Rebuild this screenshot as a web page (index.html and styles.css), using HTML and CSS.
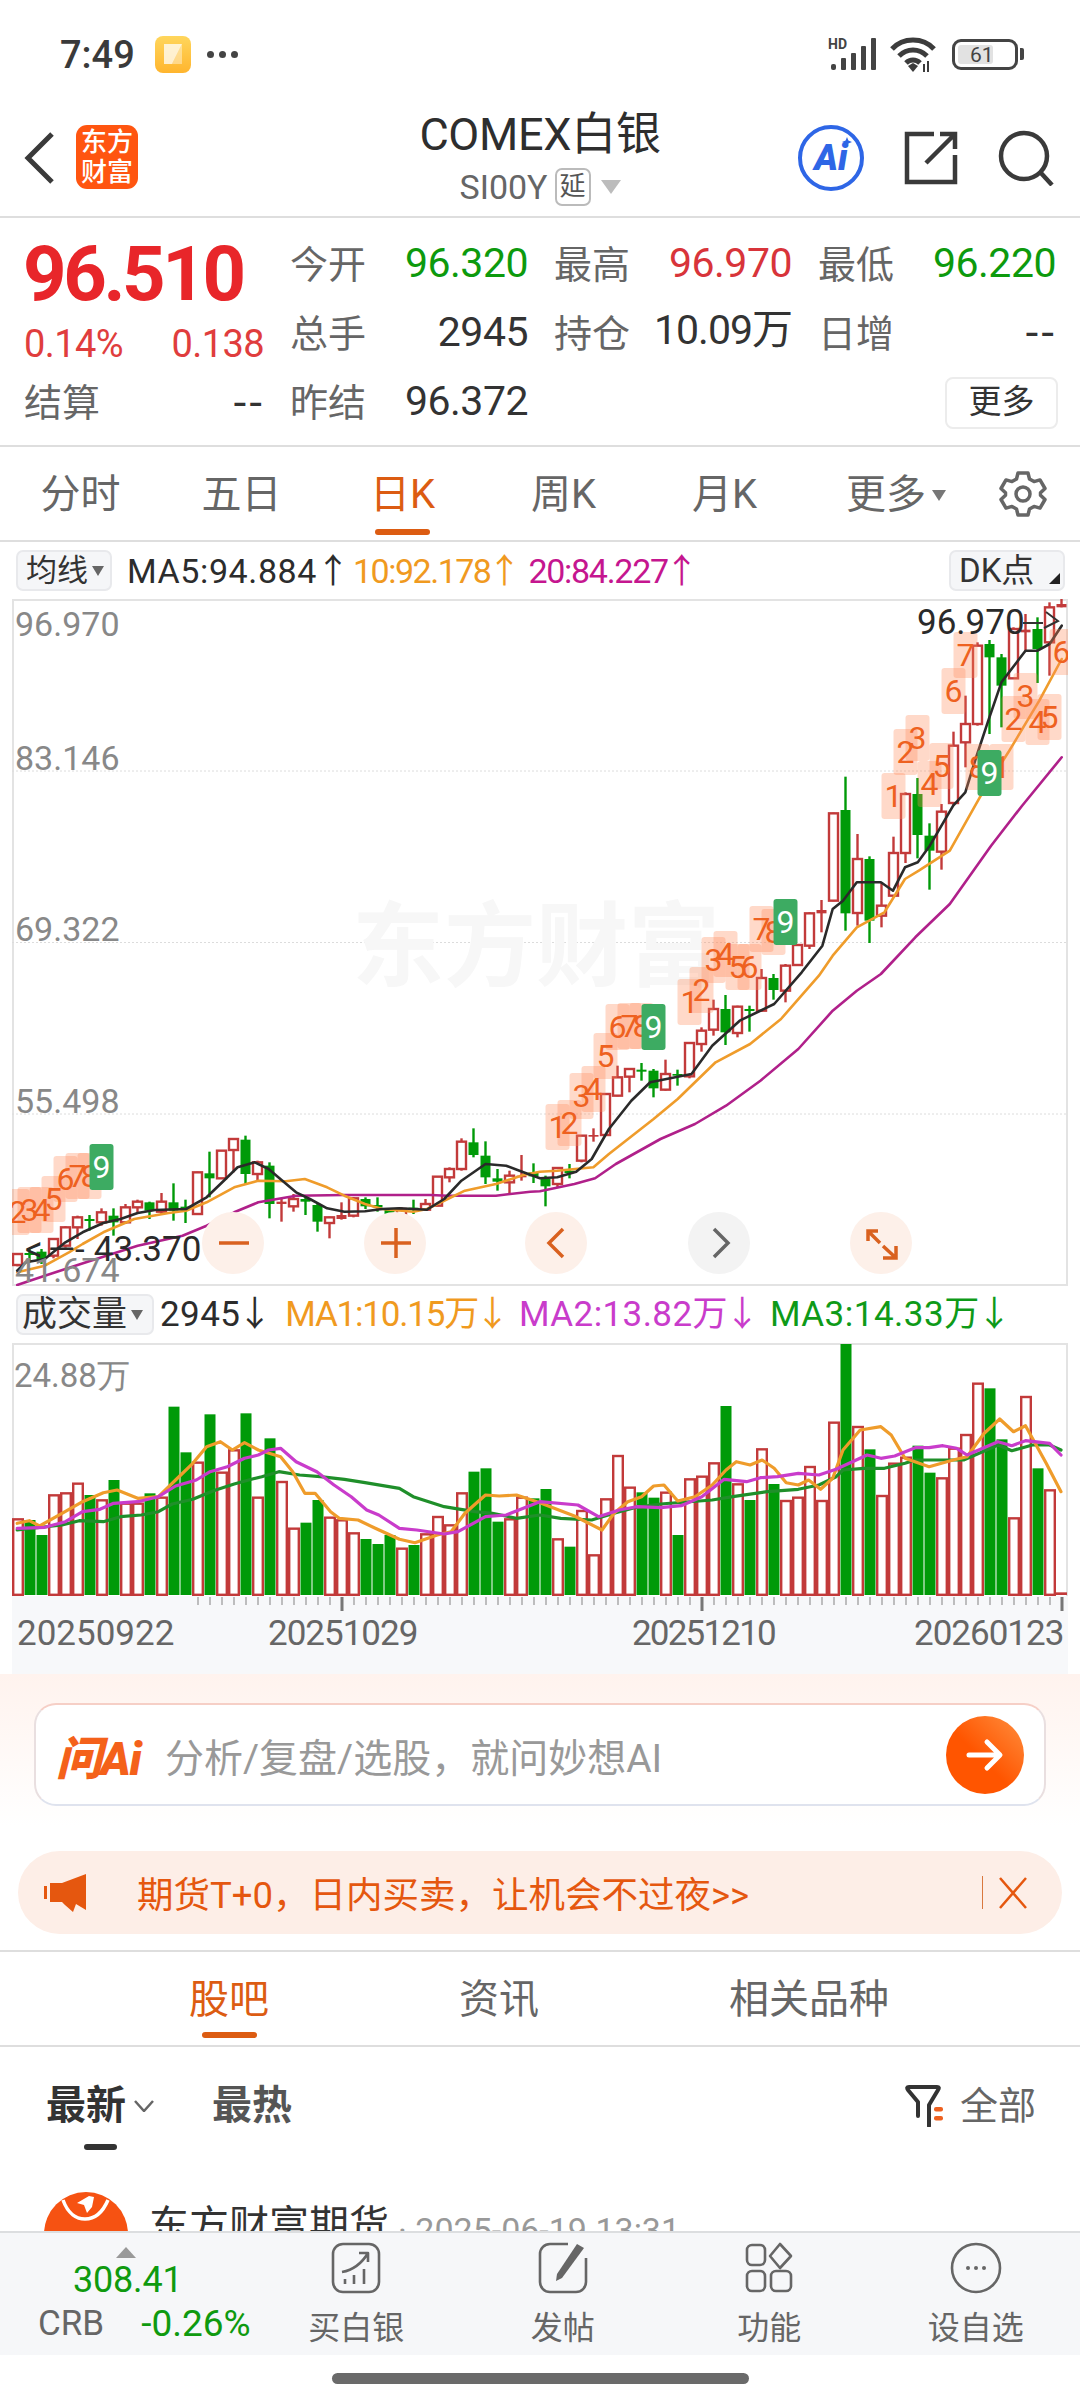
FILE: index.html
```html
<!DOCTYPE html>
<html lang="zh">
<head>
<meta charset="utf-8">
<title>COMEX白银</title>
<link rel="stylesheet" href="styles.css">
</head>
<body>
<div class="page">
  <header class="status">
    <span class="clock">7:49</span>
    <span class="note-icon"><svg width="36" height="36" viewBox="0 0 36 36"><path class="note-fold" d="M9 8h18L17 28H9z"/><path class="note-fold2" d="M27 8v20H17z"/></svg></span>
    <span class="status-dots"><i></i><i></i><i></i></span>
    <span class="status-right">
      <svg class="signal" width="52" height="34" viewBox="0 0 52 34">
        <text class="hd" x="0" y="12">HD</text>
        <rect x="3" y="27" width="5" height="6" rx="2"/><rect x="13" y="21" width="5" height="12" rx="1"/><rect x="23" y="16" width="5" height="17" rx="1"/><rect x="33" y="9" width="5" height="24" rx="1"/><rect x="43" y="1" width="5" height="32" rx="1"/>
      </svg>
      <svg class="wifi" width="46" height="36" viewBox="0 0 46 36">
        <path class="wifi-arc" d="M2 13C13 1 33 1 44 13M9 20C17 12 29 12 37 20M16 27C20 23 26 23 30 27"/>
        <path class="wifi-dot" d="M23 36l-5-6 5-3 5 3z"/>
        <rect class="wifi-dot" x="33" y="28" width="2" height="8"/><rect class="wifi-dot" x="37" y="25" width="2" height="11"/>
      </svg>
      <span class="battery"><span class="battery-fill"></span><span class="battery-num">61</span></span>
      <span class="battery-cap"></span>
    </span>
  </header>

  <nav class="nav">
    <svg class="nav-back" width="32" height="52" viewBox="0 0 32 52"><path d="M28 2L4 26l24 24"/></svg>
    <span class="brand"><span>东方</span><span>财富</span></span>
    <div class="nav-title">
      <div class="nav-name">COMEX白银</div>
      <div class="nav-sub">SI00Y<span class="tag">延</span><i class="caret"></i></div>
    </div>
    <div class="nav-tools">
      <span class="ai-badge">Ai<svg class="ai-star" width="10" height="10" viewBox="0 0 10 10"><path d="M5 0l1.4 3.6L10 5 6.4 6.4 5 10 3.6 6.4 0 5l3.6-1.4z"/></svg></span>
      <svg class="tool" width="54" height="54" viewBox="0 0 54 54"><path d="M30 3H3v48h48V24M22 32L51 3M36 3h15v15"/></svg>
      <svg class="tool" width="56" height="56" viewBox="0 0 56 56"><circle cx="26" cy="26" r="23"/><path d="M43 43l11 12"/></svg>
    </div>
  </nav>

  <section class="quote">
    <div class="quote-main">
      <div class="price">96.510</div>
      <div class="change"><span>0.14%</span><span>0.138</span></div>
      <div class="kv"><span class="k">结算</span><span class="v dash">--</span></div>
    </div>
    <div class="quote-grid">
      <div class="kv"><span class="k">今开</span><span class="v green">96.320</span></div>
      <div class="kv"><span class="k">最高</span><span class="v red">96.970</span></div>
      <div class="kv"><span class="k">最低</span><span class="v green">96.220</span></div>
      <div class="kv"><span class="k">总手</span><span class="v">2945</span></div>
      <div class="kv"><span class="k">持仓</span><span class="v v-wan">10.09万</span></div>
      <div class="kv"><span class="k">日增</span><span class="v dash">--</span></div>
      <div class="kv"><span class="k">昨结</span><span class="v">96.372</span></div>
      <div></div>
      <div class="more-cell"><span class="more-btn">更多</span></div>
    </div>
  </section>

  <div class="period-tabs">
    <span class="ptab">分时</span>
    <span class="ptab">五日</span>
    <span class="ptab active">日K</span>
    <span class="ptab">周K</span>
    <span class="ptab">月K</span>
    <span class="ptab ptab-more">更多<i class="caret-small"></i></span>
    <svg class="gear" width="48" height="48" viewBox="0 0 48 48"><path d="M19 3H29L30.5 9 35 11.6 41 9.9 46 18.5 41.5 22.8V25.2L46 29.5 41 38.1 35 36.4 30.5 39 29 45H19L17.5 39 13 36.4 7 38.1 2 29.5 6.5 25.2V22.8L2 18.5 7 9.9 13 11.6 17.5 9Z"/><circle cx="24" cy="24" r="7"/></svg>
  </div>

  <div class="legend legend-price">
    <span class="chip">均线<i class="caret-chip"></i></span>
    <span class="lg black l1">MA5:94.884<b>↑</b></span>
    <span class="lg orange l2">10:92.178<b>↑</b></span>
    <span class="lg magenta l3">20:84.227<b>↑</b></span>
    <span class="chip chip-dk">DK点<i class="corner"></i></span>
  </div>

  <svg id="kline" class="kline" viewBox="12 600 1056 687" width="1056" height="687">
    <rect class="frame" x="13" y="601" width="1054" height="685"/>
    <line class="grid" x1="12" x2="1067" y1="772" y2="772"/>
    <line class="grid" x1="12" x2="1067" y1="943.5" y2="943.5"/>
    <line class="grid" x1="12" x2="1067" y1="1115" y2="1115"/>
    <text class="watermark" x="352" y="980">东方财富</text>
    <g id="kl-candles"></g>
    <g id="kl-lines"></g>
    <g id="kl-marks"></g>
    <text class="axis" x="15" y="637">96.970</text>
    <text class="axis" x="15" y="771">83.146</text>
    <text class="axis" x="15" y="942">69.322</text>
    <text class="axis" x="15" y="1114">55.498</text>
    <text class="axis" x="15" y="1283">41.674</text>
    <text class="note" x="917" y="635">96.970</text>
    <path class="note-line" d="M1023 624h20M1046 613l12 9-14 7"/>
    <text class="note" x="25" y="1262">&lt;<tspan dx="5">—-</tspan><tspan dx="9">43.370</tspan></text>
    <g class="zoom-btn">
      <circle cx="233" cy="1244" r="31"/><path d="M219 1244h30"/>
      <circle cx="395" cy="1244" r="31"/><path d="M381 1244h30M396 1229v30"/>
      <circle cx="556" cy="1244" r="31"/><path d="M563 1230l-14 14 14 14"/>
      <circle class="idle" cx="719" cy="1244" r="31"/><path class="idle" d="M714 1230l14 14-14 14"/>
      <circle cx="881" cy="1244" r="31"/><path d="M868 1232l12 12M868 1242v-10h10M883 1247l13 12M896 1247v12h-13"/>
    </g>
  </svg>

  <div class="legend legend-vol">
    <span class="chip chip-vol">成交量<i class="caret-chip"></i></span>
    <span class="vg black v1">2945<b>↓</b></span>
    <span class="vg orange v2">MA1:10.15万<b>↓</b></span>
    <span class="vg violet v3">MA2:13.82万<b>↓</b></span>
    <span class="vg dgreen v4">MA3:14.33万<b>↓</b></span>
  </div>

  <svg id="volume" class="volume" viewBox="12 1343 1056 331" width="1056" height="331">
    <rect class="axis-bg" x="12" y="1596" width="1056" height="78"/>
    <path class="frame" d="M13 1596V1344H1067V1596"/>
    <text class="axis axis-sm" x="14" y="1387">24.88万</text>
    <g id="vol-bars"></g>
    <g id="vol-lines"></g>
    <g id="vol-ticks"></g>
    <text class="date" x="17" y="1645">20250922</text>
    <text class="date date-t1" x="268" y="1645">20251029</text>
    <text class="date date-t2" x="632" y="1645">20251210</text>
    <text class="date date-t1" x="914" y="1645">20260123</text>
  </svg>

  <section class="promo">
    <div class="ask">
      <span class="ask-logo">问Ai</span>
      <span class="ask-hint">分析/复盘/选股，就问妙想AI</span>
      <span class="ask-go"><svg width="40" height="40" viewBox="0 0 40 40"><path d="M4 20h30M22 7l13 13-13 13"/></svg></span>
    </div>
    <div class="banner">
      <svg class="horn" width="44" height="38" viewBox="0 0 44 38"><path d="M0 12h3v13H0zM6 9h12L42 0v36L32 30l-3 8-8-7-3-3H6z"/></svg>
      <span class="banner-text">期货T+0，日内买卖，让机会不过夜&gt;&gt;</span>
      <span class="banner-sep"></span>
      <svg class="banner-x" width="30" height="32" viewBox="0 0 30 32"><path d="M2 1l26 30M28 1L2 31"/></svg>
    </div>
  </section>

  <div class="info-tabs">
    <span class="itab active">股吧</span>
    <span class="itab">资讯</span>
    <span class="itab">相关品种</span>
  </div>

  <main class="feed">
    <div class="sortbar">
      <span class="sort sort-on">最新<svg class="chev" width="20" height="12" viewBox="0 0 20 12"><path d="M1 1l9 10 9-10"/></svg></span>
      <span class="sort sort-hot">最热</span>
      <span class="filter">
        <svg width="42" height="42" viewBox="0 0 42 42"><path class="f-line" d="M13 31V17L3 5Q1 2 4 2H32Q35 2 33 5L24 20V41"/><rect class="f-dot" x="29" y="22" width="9" height="4.5" rx="2"/><rect class="f-dot" x="29" y="31" width="9" height="4.5" rx="2"/></svg>
        全部
      </span>
    </div>
    <article class="post">
      <span class="avatar"><svg width="84" height="84" viewBox="0 0 84 84"><circle cx="42" cy="42" r="42"/><path class="av-arc" d="M19 8C24 22 33 27 41 27S58 22 64 8"/><path class="av-wing" d="M33 11l12-7 5 1-2 10-5 6-3-8z"/></svg></span>
      <span class="post-name">东方财富期货</span>
      <span class="post-time">· 2025-06-19 13:31</span>
    </article>
  </main>

  <footer class="dock">
    <div class="ticker">
      <i class="ticker-caret"></i>
      <div class="ticker-val">308.41</div>
      <div class="ticker-row"><span class="ticker-name">CRB</span><span class="ticker-pct">-0.26%</span></div>
    </div>
    <div class="dock-item">
      <svg width="50" height="52" viewBox="0 0 50 52"><rect x="2" y="2" width="46" height="48" rx="10"/><path d="M11 30C22 28 31 21 37 11M28 11h9v9M14 42v-5M23 42v-9M33 42V27"/></svg>
      <span>买白银</span>
    </div>
    <div class="dock-item">
      <svg width="50" height="52" viewBox="0 0 50 52"><path d="M30 2H12A10 10 0 0 0 2 12v28a10 10 0 0 0 10 10h26a10 10 0 0 0 10-10V16"/><path class="pen" d="M39 2l7 4-22 30-6 3 1-7z"/></svg>
      <span>发帖</span>
    </div>
    <div class="dock-item">
      <svg width="50" height="52" viewBox="0 0 50 52"><rect x="3" y="3" width="18" height="20" rx="5"/><rect x="3" y="29" width="18" height="20" rx="5"/><rect x="27" y="29" width="20" height="20" rx="5"/><path d="M36 2l11 12-11 12-10-12z"/></svg>
      <span>功能</span>
    </div>
    <div class="dock-item">
      <svg width="52" height="52" viewBox="0 0 52 52"><circle cx="26" cy="26" r="24"/><circle class="dot" cx="18" cy="26" r="2"/><circle class="dot" cx="26" cy="26" r="2"/><circle class="dot" cx="34" cy="26" r="2"/></svg>
      <span>设自选</span>
    </div>
  </footer>

  <div class="home-area"><span class="home-bar"></span></div>
</div>
<script src="chart.js"></script>
</body>
</html>
```

FILE: styles.css
```css
* { box-sizing: border-box; }
html, body { margin: 0; padding: 0; background: #fff; }
body { font-family: Roboto, "Noto Sans CJK SC", sans-serif; color: #333; }
.page { width: 1080px; height: 2400px; display: flex; flex-direction: column; overflow: hidden; }
i { display: inline-block; font-style: normal; }

/* status bar */
.status { height: 108px; display: flex; align-items: center; padding: 0 56px 0 60px; flex: none; }
.clock { font-size: 38px; font-weight: 500; color: #3a3a3a; line-height: 1; margin-top: 2px; }
.note-icon { width: 36px; height: 37px; margin-left: 20px; border-radius: 8px; background: linear-gradient(#ffd65c, #ffb52e); display: block; }
.note-icon svg { display: block; }
.note-fold { fill: #fff; opacity: .75; }
.note-fold2 { fill: #fff; opacity: .4; }
.status-dots { display: flex; gap: 5px; margin-left: 16px; }
.status-dots i { width: 7px; height: 7px; border-radius: 50%; background: #444; }
.status-right { margin-left: auto; display: flex; align-items: center; }
.signal rect { fill: #444; }
.hd { font: 700 14px Roboto, sans-serif; fill: #444; }
.wifi { margin-left: 10px; }
.wifi-arc { fill: none; stroke: #3c3c3c; stroke-width: 5; }
.wifi-dot { fill: #3c3c3c; }
.battery { position: relative; width: 66px; height: 31px; margin-left: 16px; border: 3px solid #444; border-radius: 9px; display: block; }
.battery-fill { position: absolute; left: 3px; top: 3px; bottom: 3px; width: 35px; background: #e2e2e2; border-radius: 3px; }
.battery-num { position: absolute; left: 15px; top: 2px; font-size: 21px; line-height: 22px; color: #444; }
.battery-cap { width: 4px; height: 12px; background: #444; margin-left: 2px; border-radius: 0 2px 2px 0; }

/* nav */
.nav { height: 110px; display: flex; align-items: flex-start; position: relative; border-bottom: 2px solid #dedede; flex: none; padding-left: 24px; }
.nav-back { margin-top: 24px; fill: none; stroke: #3a3a3a; stroke-width: 5; }
.brand { margin: 17px 0 0 20px; width: 62px; height: 64px; border-radius: 11px; background: #ff5510; color: #fff; font-size: 26px; line-height: 30px; font-weight: 500; display: flex; flex-direction: column; align-items: center; justify-content: center; }
.nav-title { position: absolute; left: 0; right: 0; top: 0; text-align: center; }
.nav-name { font-size: 45px; line-height: 52px; margin-top: 1px; color: #2e2e2e; letter-spacing: -.3px; }
.nav-sub { display: flex; justify-content: center; align-items: center; height: 40px; margin-top: 6px; font-size: 34px; color: #666; padding-left: 0; }
.tag { width: 36px; height: 38px; margin-left: 7px; border: 2px solid #bbb; border-radius: 7px; font-size: 26px; line-height: 33px; text-align: center; color: #555; }
.caret { width: 0; height: 0; margin-left: 10px; border: 10px solid transparent; border-top: 14px solid #bcbcbc; border-bottom: 0; }
.nav-tools { margin-left: auto; display: flex; align-items: center; padding: 17px 26px 0 0; }
.ai-badge { position: relative; width: 66px; height: 66px; border: 4px solid #2e66e6; border-radius: 50%; color: #2e66e6; font: italic 900 36px/58px Roboto, sans-serif; text-align: center; display: block; }
.ai-star { position: absolute; right: 8px; top: 8px; fill: #2e66e6; }
.tool { fill: none; stroke: #3a3a3a; stroke-width: 4.5; }
.nav-tools .tool:nth-child(2) { margin-left: 40px; }
.nav-tools .tool:nth-child(3) { margin-left: 40px; }

/* quote */
.quote { height: 229px; display: flex; flex: none; padding-left: 24px; border-bottom: 2px solid #dedede; }
.quote-main { width: 240px; }
.price { font-size: 76px; line-height: 78px; font-weight: 700; color: #e8262a; letter-spacing: -3.4px; margin-top: 17px; margin-left: -1px; white-space: nowrap; }
.change { display: flex; justify-content: space-between; font-size: 38px; line-height: 40px; color: #e03d3d; margin-top: 11px; letter-spacing: -.6px; }
.kv { display: flex; justify-content: space-between; align-items: center; height: 69px; font-size: 38px; }
.quote-main .kv { height: 40px; margin-top: 19px; }
.k { color: #666; margin-top: -7px; }
.v { color: #333; font-size: 41px; line-height: 46px; letter-spacing: -.5px; margin-top: -3px; }
.v-wan { letter-spacing: -1px; margin-top: -7px; }
.dash { font-family: "DejaVu Sans", sans-serif; letter-spacing: 1px; }
.green { color: #0d9a0d; }
.red { color: #d8343a; }
.quote-grid { margin-left: 26px; padding-top: 12px; display: grid; grid-template-columns: repeat(3, 238px); column-gap: 26px; grid-auto-rows: 69px; align-content: start; }
.more-cell { display: flex; justify-content: flex-end; align-items: center; margin-right: -2px; }
.more-btn { width: 113px; height: 52px; border: 2px solid #ececec; border-radius: 8px; font-size: 33px; line-height: 46px; text-align: center; color: #333; }

/* period tabs */
.period-tabs { height: 95px; display: flex; align-items: center; flex: none; border-bottom: 2px solid #dedede; }
.ptab { width: 161px; position: relative; text-align: center; font-size: 40px; color: #666; line-height: 97px; height: 95px; flex: none; }
.ptab.active { color: #dc5c12; }
.ptab.active::after { content: ""; position: absolute; left: 53px; top: 83px; width: 55px; height: 6px; border-radius: 3px; background: #dc5c12; }
.ptab-more { width: 182px; }
.caret-small { width: 0; height: 0; margin-left: 6px; vertical-align: 7px; border: 7px solid transparent; border-top: 11px solid #777; border-bottom: 0; }
.gear { margin-left: 12px; fill: none; stroke: #666; stroke-width: 3.5; stroke-linejoin: round; }

/* chart legends */
.legend { display: flex; align-items: center; flex: none; padding-left: 16px; white-space: nowrap; }
.legend-price { height: 57px; }
.legend-vol { height: 57px; }
.chip { height: 41px; background: #f5f6f8; border: 2px solid #e8e9ec; border-radius: 7px; color: #333; font-size: 31px; line-height: 36px; padding: 0 6px 0 8px; display: flex; align-items: center; }
.caret-chip { width: 0; height: 0; margin-left: 4px; border: 6px solid transparent; border-top: 10px solid #666; border-bottom: 0; }
.chip-dk { margin-left: auto; margin-right: 15px; width: 116px; position: relative; font-size: 33px; }
.corner { position: absolute; right: 3px; bottom: 5px; width: 0; height: 0; border-left: 11px solid transparent; border-bottom: 11px solid #222; }
.lg { font-size: 34px; line-height: 40px; }
.lg b { font-weight: 400; margin: 0 -5px 0 -1px; letter-spacing: 0; }
.l1 { margin-left: 15px; letter-spacing: .6px; }
.l2 { margin-left: 8px; letter-spacing: -1.5px; }
.l2 b, .l3 b { margin-left: -3px; }
.l3 { margin-left: 12px; letter-spacing: -1.3px; }
.black { color: #2c2c2c; }
.orange { color: #f09a1f; }
.magenta { color: #c5168f; }
.violet { color: #c93ccb; }
.dgreen { color: #0e9a18; }
.chip-vol { width: 138px; font-size: 35px; padding: 0 0 0 4px; letter-spacing: 0; }
.chip-vol .caret-chip { margin-left: 4px; }
.vg { font-size: 35px; line-height: 40px; }
.vg b { font-weight: 400; margin: 0 -3px 0 -3px; letter-spacing: 0; }
.v1 { margin-left: 6px; letter-spacing: .4px; }
.v2 { margin-left: 16px; letter-spacing: -1.2px; }
.v3 { margin-left: 12px; letter-spacing: .4px; }
.v4 { margin-left: 13px; letter-spacing: .5px; }

/* charts */
.kline, .volume { display: block; flex: none; margin-left: 12px; overflow: hidden; }
.frame { fill: none; stroke: #e3e3e3; stroke-width: 2; }
.grid { stroke: #dcdcdc; stroke-width: 1; stroke-dasharray: 2 2; }
.watermark { font: 700 92px "Noto Sans CJK SC", sans-serif; fill: #f7f7f7; }
.axis { font: 400 34px Roboto, sans-serif; fill: #888; }
.axis-sm { font-size: 33px; }
.note { font: 400 35px Roboto, sans-serif; fill: #2a2a2a; }
.note-line { fill: none; stroke: #333; stroke-width: 2; }
.wick { stroke-width: 2.4; }
.wick-up { stroke: #c23a3a; }
.wick-down { stroke: #009a08; }
.body-up { fill: #fff; stroke: #c23a3a; stroke-width: 2.4; }
.body-down { fill: #009a08; }
.body-flat { fill: #c23a3a; }
.ma { fill: none; stroke-width: 2.6; stroke-linejoin: round; stroke-linecap: round; }
.ma-black { stroke: #2a2a2a; }
.ma-orange { stroke: #ef9c2b; }
.ma-purple { stroke: #b0208a; }
.ma-violet { stroke: #c93ccb; }
.ma-green { stroke: #1f8f2a; }
.ma-thick { stroke-width: 3.2; }
.td-box { fill: #ff8d5c; fill-opacity: .33; }
.td-num { font: 400 32px Roboto, sans-serif; fill: #ee6120; text-anchor: middle; }
.td-nine { fill: #3dab62; }
.td-nine-num { font: 400 32px Roboto, sans-serif; fill: #fff; text-anchor: middle; }
.zoom-btn circle { fill: #fdf0e9; }
.zoom-btn path { fill: none; stroke: #d9611f; stroke-width: 3.5; }
.zoom-btn circle.idle { fill: #f3f3f3; }
.zoom-btn path.idle { stroke: #666; }
.axis-bg { fill: #f7f8fa; }
.date { font: 400 35px Roboto, sans-serif; fill: #666; }
.date-t1 { letter-spacing: -1px; }
.date-t2 { letter-spacing: -1.8px; }
.vol-up { fill: #fff; stroke: #c23a3a; stroke-width: 2.4; }
.vol-down { fill: #009a08; }
.vol-cap { fill: #c23a3a; }
.tick { stroke: #aaa; stroke-width: 1.5; }
.tick-major { stroke: #777; stroke-width: 3; }

/* promo */
.promo { height: 276px; flex: none; padding-top: 29px; background: linear-gradient(#fff3ee 0, #fff 55%); }
.ask { height: 103px; margin: 0 34px; background: #fff; border: 2px solid #e9dfe0; border-top-color: #f6cfc6; border-bottom-color: #dfe3ee; border-radius: 22px; display: flex; align-items: center; padding: 0 20px 0 20px; }
.ask-logo { width: 92px; font-size: 46px; font-weight: 900; font-style: italic; color: #f4611a; letter-spacing: -1.5px; white-space: nowrap; }
.ask-hint { margin-left: 17px; font-size: 39px; color: #999; white-space: nowrap; }
.ask-go { margin-left: auto; width: 78px; height: 78px; border-radius: 50%; background: linear-gradient(45deg, #ff5500 45%, #ff8f3f); display: flex; align-items: center; justify-content: center; }
.ask-go svg { fill: none; stroke: #fff; stroke-width: 5; stroke-linecap: round; stroke-linejoin: round; }
.banner { height: 83px; margin: 45px 18px 0; background: #fdeee7; border-radius: 42px; display: flex; align-items: center; padding-left: 26px; }
.horn { fill: #e5570f; }
.banner-text { margin-left: 49px; font-size: 36.5px; color: #e5570f; white-space: nowrap; }
.banner-sep { margin-left: auto; width: 1px; height: 33px; background: #d9783f; }
.banner-x { margin: 0 34px 0 15px; fill: none; stroke: #e5570f; stroke-width: 2.5; }

/* info tabs */
.info-tabs { height: 97px; flex: none; border-top: 2px solid #dedede; border-bottom: 2px solid #dedede; display: flex; padding-left: 189px; }
.itab { position: relative; font-size: 40px; line-height: 96px; color: #666; margin-right: 190px; white-space: nowrap; }
.itab.active { color: #dc5c12; }
.itab.active::after { content: ""; position: absolute; left: 13px; top: 80px; width: 55px; height: 6px; border-radius: 3px; background: #dc5c12; }

/* feed */
.feed { flex: 1; overflow: hidden; min-height: 0; }
.sortbar { height: 115px; display: flex; align-items: flex-start; padding: 34px 44px 0 46px; position: relative; }
.sort { font-size: 40px; line-height: 50px; font-weight: 700; }
.sort-on { color: #333; position: relative; display: flex; align-items: center; }
.sort-on::after { content: ""; position: absolute; left: 38px; top: 63px; width: 33px; height: 6px; border-radius: 3px; background: #333; }
.sort-hot { margin-left: 58px; color: #555; }
.chev { margin-left: 8px; fill: none; stroke: #666; stroke-width: 2.5; }
.filter { margin-left: auto; display: flex; align-items: center; font-size: 38px; line-height: 50px; color: #666; gap: 13px; height: 50px; }
.f-line { fill: none; stroke: #333; stroke-width: 4; stroke-linejoin: round; stroke-linecap: round; }
.f-dot { fill: #ee6120; }
.post { display: flex; padding: 30px 0 0 44px; height: 100px; }
.avatar { width: 84px; height: 84px; display: block; flex: none; }
.avatar svg { display: block; fill: #f65212; }
.av-arc { fill: none; stroke: #fff; stroke-width: 3.5; }
.av-wing { fill: #fff; }
.post-name { margin: 9px 0 0 21px; font-size: 40px; line-height: 50px; color: #333; }
.post-time { margin: 18px 0 0 9px; font-size: 34px; line-height: 40px; color: #999; }

/* dock */
.dock { height: 124px; flex: none; background: #f6f7f9; border-top: 2px solid #dcdee0; display: flex; }
.ticker { width: 253px; position: relative; padding-left: 38px; }
.ticker-caret { position: absolute; left: 116px; top: 14px; width: 0; height: 0; border: 10px solid transparent; border-bottom: 11px solid #999; border-top: 0; }
.ticker-val { margin-left: 35px; margin-top: 25px; font-size: 36px; line-height: 44px; color: #0f9a0f; letter-spacing: -.2px; }
.ticker-row { display: flex; margin-top: 0; font-size: 35px; line-height: 44px; }
.ticker-name { color: #666; }
.ticker-pct { color: #0f9a0f; margin-left: 37px; font-size: 37px; }
.dock-item { width: 206.5px; display: flex; flex-direction: column; align-items: center; font-size: 32px; color: #666; padding-top: 9px; }
.dock-item svg { fill: none; stroke: #666; stroke-width: 2.6; stroke-linejoin: round; }
.dock-item span { line-height: 42px; margin-top: 13px; }
.dock-item .pen { fill: #666; stroke: none; }
.dock-item .dot { fill: #666; stroke: none; }

/* home bar */
.home-area { height: 45px; flex: none; display: flex; justify-content: center; padding-top: 18px; }
.home-bar { width: 417px; height: 11px; border-radius: 6px; background: #6a6a6a; }
```

FILE: chart.js
```js
// Daily K-line and volume data, in chart pixels read as [x,y] on a 2.904 x 3 grid.
var SVGNS = 'http://www.w3.org/2000/svg';
function el(parent, name, attrs, text) {
  var n = document.createElementNS(SVGNS, name);
  for (var k in attrs) n.setAttribute(k, attrs[k]);
  if (text !== undefined) n.textContent = text;
  parent.appendChild(n);
  return n;
}
function seg(xBase, yBase, flat) {
  var out = [];
  for (var i = 0; i < flat.length; i += 2) out.push([xBase + flat[i] / 2.904, yBase + flat[i + 1] / 3]);
  return out;
}
function poly(parent, pts, cls) {
  el(parent, 'polyline', { 'class': cls, points: pts.map(function (p) { return p[0].toFixed(1) + ',' + p[1].toFixed(1); }).join(' ') });
}
function cx(i) { return 17.5 + 12 * i; }

// wick top, body top, body bottom, wick bottom, kind (u hollow, d solid green, f flat red, c green cross)
var candlesA = [
[612,615,648,652,'u'],[600,612,618,640,'c'],[600,608,630,645,'d'],[568,570,620,628,'u'],[532,535,590,596,'u'],[500,505,535,570,'u'],[498,510,516,545,'c'],[478,490,520,530,'u'],
[478,500,520,560,'d'],[465,475,520,525,'u'],[452,458,475,490,'u'],[458,460,485,510,'d'],[432,458,488,495,'u'],[403,460,485,515,'d'],[452,473,480,522,'c'],[368,370,495,497,'u'],
[308,373,388,445,'d'],[303,305,388,390,'u'],[268,270,303,370,'u'],[260,272,375,405,'d'],[335,340,375,395,'u'],[340,350,465,508,'d'],[450,458,465,518,'f'],[435,450,472,488,'u'],
[445,450,458,498,'c'],[462,468,518,548,'d'],[503,505,522,568,'u'],[460,498,510,512,'f'],[445,448,500,505,'u'],[445,450,472,480,'d'],[445,468,475,488,'c'],[480,482,515,525,'d'],
[475,480,518,530,'u'],[452,476,482,495,'c'],[450,465,482,485,'u'],[381,383,470,472,'u'],[355,360,385,400,'u'],[268,278,360,365,'u'],[238,280,318,325,'d'],[277,320,385,405,'d'],
[360,388,398,425,'d'],[365,380,400,432,'u'],[318,380,385,395,'f'],[343,370,382,402,'d'],[380,390,412,472,'d'],[355,357,405,415,'u'],[345,365,372,388,'c'],[258,260,335,340,'u'],
[238,258,263,278,'f'],[133,135,258,260,'u'],[50,85,140,142,'u'],[58,60,83,130,'u'],[42,62,68,95,'c'],[60,65,118,145,'d'],[32,75,122,125,'u'],[62,75,80,110,'c']];
var candlesB = [
[1390,1392,1492,1498,'u'],[1345,1355,1395,1418,'u'],[1262,1290,1352,1370,'u'],[1248,1290,1360,1398,'d'],[1280,1283,1362,1375,'u'],[1280,1290,1296,1358,'c'],[1170,1197,1295,1298,'u'],[1185,1197,1233,1262,'d'],
[1155,1160,1235,1270,'u'],[1096,1098,1158,1160,'u'],[1000,1003,1100,1110,'u'],[963,993,1003,1060,'f'],[701,703,965,967,'u'],[593,693,1003,1055,'d'],[765,840,1002,1040,'u'],[832,840,1025,1092,'d'],
[910,980,1010,1045,'u'],[773,822,950,955,'u'],[640,645,822,852,'u'],[597,645,768,838,'d'],[733,770,815,932,'d'],[675,698,818,872,'u'],[458,500,672,678,'u'],[350,435,490,565,'u'],
[190,200,435,440,'u'],[183,195,235,465,'d'],[225,235,320,445,'d'],[145,150,298,300,'u'],[105,152,160,215,'f'],[115,150,210,312,'d'],[70,85,190,290,'u'],[60,75,85,85,'f']];

function drawCandles() {
  var g = document.getElementById('kl-candles');
  candlesA.concat(candlesB).forEach(function (c, i) {
    var base = i < candlesA.length ? 1050 : 580;
    var y = function (v) { return base + v / 3; };
    var x = cx(i), kind = c[4];
    var upish = kind === 'u' || kind === 'f';
    el(g, 'line', { 'class': 'wick ' + (upish ? 'wick-up' : 'wick-down'), x1: x, x2: x, y1: y(c[0]), y2: y(c[3]) });
    var h = y(c[2]) - y(c[1]);
    if (kind === 'u') el(g, 'rect', { 'class': 'body-up', x: x - 4.5, y: y(c[1]), width: 9, height: h });
    else if (kind === 'd') el(g, 'rect', { 'class': 'body-down', x: x - 5, y: y(c[1]), width: 10, height: h });
    else if (kind === 'c') el(g, 'rect', { 'class': 'body-down', x: x - 5, y: y(c[1]), width: 10, height: h });
    else el(g, 'rect', { 'class': 'body-flat', x: x - 5, y: y(c[1]), width: 10, height: h });
  });
}

var maBlack = seg(0, 1050, [50,665,75,640,130,630,190,580,240,550,300,522,350,510,400,492,450,483,540,480,600,445,650,395,690,355,740,340,780,360,820,395,860,430,900,450,950,478,1000,488,1060,487,1110,480,1160,478,1240,482,1290,450,1340,395,1410,345,1470,350,1520,370,1568,388])
  .concat(seg(540, 1050, [50,385,105,368,150,330,200,240,265,155,320,100]))
  .concat(seg(540, 580, [440,1485,500,1400,580,1325,680,1275,760,1180,820,1100,850,990,880,965,920,910,990,910,1025,935,1060,865,1097,850,1132,800,1200,680,1235,640,1265,540,1300,430,1340,310,1410,215,1445,215,1480,195,1515,140]));
var maOrange = seg(0, 1050, [50,670,130,650,200,610,240,585,300,550,390,510,490,492,540,485,600,460,680,415,750,395,830,397,885,390,950,415,1000,440,1060,465,1110,480,1200,488,1240,480,1300,450,1350,425,1440,405,1520,378,1568,368])
  .concat(seg(540, 1050, [50,365,155,355,200,315,330,210,400,150]))
  .concat(seg(540, 580, [510,1450,610,1395,700,1320,810,1190,850,1130,920,1045,1000,1000,1060,900,1100,875,1190,815,1280,650,1360,520,1450,365,1515,240]));
var maPurple = seg(0, 1050, [50,708,130,680,250,640,400,590,530,560,600,530,680,490,750,460,860,440,1000,438,1250,438,1300,440,1440,440,1540,428,1568,427])
  .concat(seg(540, 1050, [100,405,160,388,220,345,350,270,450,225,540,170,640,95]))
  .concat(seg(540, 580, [750,1410,850,1295,920,1235,990,1185,1090,1075,1190,975,1310,800,1400,680,1515,535]));

// index, digit, vertical centre
var marks = [
[0,2,1213],[1,3,1211],[2,4,1211],[3,5,1200],[4,6,1180],[5,7,1177],[6,8,1177],[7,9,1168],
[45,1,1128],[46,2,1124],[47,3,1097],[48,4,1090],[49,5,1057],[50,6,1028],[51,7,1027],[52,8,1027],[53,9,1028],
[56,1,1003],[57,2,991],[58,3,961],[59,4,955],[60,5,968],[61,6,968],[62,7,930],[63,8,933],[64,9,923],
[73,1,797],[74,2,753],[75,3,739],[76,4,785],[77,5,767],[78,6,692],[79,7,656],[80,8,768],[81,9,774],
[82,1,768],[83,2,720],[84,3,697],[85,4,723],[86,5,718],[87,6,653]];

function drawMarks() {
  var g = document.getElementById('kl-marks');
  marks.forEach(function (m) {
    if (m[1] !== 9) el(g, 'rect', { 'class': 'td-box', x: cx(m[0]) - 12, y: m[2] - 23, width: 24, height: 46, rx: 3 });
  });
  marks.forEach(function (m) {
    if (m[1] !== 9) el(g, 'text', { 'class': 'td-num', x: cx(m[0]), y: m[2] + 11 }, m[1]);
  });
  marks.forEach(function (m) {
    if (m[1] === 9) {
      el(g, 'rect', { 'class': 'td-nine', x: cx(m[0]) - 12, y: m[2] - 23, width: 24, height: 46, rx: 3 });
      el(g, 'text', { 'class': 'td-nine-num', x: cx(m[0]), y: m[2] + 11 }, '9');
    }
  });
}

// top of each volume bar, u hollow, d solid green
var volTops = [
[715,'u'],[720,'d'],[765,'d'],[643,'u'],[637,'u'],[608,'u'],[645,'d'],[658,'u'],[600,'d'],[668,'u'],[668,'u'],[640,'d'],[650,'u'],[380,'d'],[517,'d'],[545,'u'],[403,'d'],[575,'u'],[508,'u'],[400,'d'],[650,'u'],[475,'d'],
[603,'u'],[743,'u'],[728,'d'],[660,'d'],[710,'u'],[718,'u'],[757,'u'],[777,'d'],[792,'d'],[765,'d'],[803,'u'],[795,'d'],[760,'u'],[708,'u'],[733,'u'],[637,'u'],[575,'d'],[565,'d'],[725,'d'],[715,'u'],[650,'u'],[655,'d'],
[627,'d'],[775,'u'],[800,'d'],[690,'u'],[823,'u'],[655,'u'],[525,'u'],[620,'u'],[637,'d'],[653,'d'],[635,'u'],[765,'d'],[595,'u'],[587,'u'],[547,'u'],[378,'d'],[610,'u'],[660,'d'],[505,'u'],[612,'d'],[660,'u'],[650,'u'],
[558,'u'],[660,'u'],[425,'u'],[192,'d'],[438,'u'],[508,'d'],[645,'u'],[548,'u'],[530,'u'],[497,'d'],[578,'d'],[592,'u'],[503,'u'],[462,'u'],[308,'u'],[325,'d'],[478,'d'],[712,'u'],[348,'u'],[565,'d'],[628,'u'],[937,'f']];

var vol1 = seg(0, 1280, [50,730,85,722,115,738,180,700,240,665,300,638,340,630,400,655,460,650,510,600,560,550,600,500,640,485,675,510,710,488,750,510,815,530,850,575,885,640,915,640,960,695,985,715,1040,720,1090,745,1160,778,1205,788,1270,765,1310,755,1350,700,1410,645,1450,648,1500,645,1568,668])
  .concat(seg(540, 1280, [100,708,180,750,215,700,255,665,295,650,330,618,360,615,400,663,450,650,500,615,540,570,570,545,610,555,645,540,680,565,715,608,750,615,780,600,815,628,850,595,880,510,930,450,990,440,1020,465,1060,535,1130,560,1200,540,1240,530,1290,460,1335,417,1375,455,1410,437,1470,550,1513,635]));
var vol2 = seg(0, 1280, [50,745,130,742,190,725,240,695,290,688,330,670,400,665,460,650,510,618,570,600,610,575,660,560,710,535,750,525,780,510,815,505,860,545,920,575,970,615,1020,650,1065,690,1100,705,1160,745,1210,750,1290,762,1330,755,1410,710,1470,705,1568,665])
  .concat(seg(540, 1280, [110,675,170,710,230,690,280,680,350,683,410,677,470,650,535,598,600,605,640,593,690,590,750,580,810,585,860,568,950,525,990,535,1030,528,1090,503,1130,503,1170,497,1210,505,1240,525,1330,485,1370,497,1410,482,1480,490,1513,525]));
var vol3 = seg(0, 1280, [50,750,180,735,230,722,300,725,350,710,410,705,460,695,500,672,560,658,620,632,680,612,730,598,760,590,810,575,870,585,930,590,1000,598,1060,608,1160,625,1200,650,1290,680,1320,685,1380,695,1430,700,1500,715,1568,705])
  .concat(seg(540, 1280, [60,715,150,720,220,698,280,682,350,672,500,660,560,650,660,635,750,628,810,615,860,590,880,570,940,565,1000,565,1060,550,1090,540,1230,540,1330,495,1370,512,1430,495,1480,495,1513,510]));

function drawVolume() {
  var g = document.getElementById('vol-bars');
  var bottom = 1595;
  volTops.forEach(function (v, i) {
    var top = 1280 + v[0] / 3, x = 12 + 12 * i;
    if (v[1] === 'u') el(g, 'rect', { 'class': 'vol-up', x: x + 1.2, y: top + 1, width: 9.6, height: bottom - top - 1.2 });
    else if (v[1] === 'd') el(g, 'rect', { 'class': 'vol-down', x: x + .5, y: top, width: 11, height: bottom - top });
    else el(g, 'rect', { 'class': 'vol-cap', x: x, y: top, width: 11, height: bottom - top });
  });
  var l = document.getElementById('vol-lines');
  poly(l, vol3, 'ma ma-thick ma-green');
  poly(l, vol1, 'ma ma-thick ma-orange');
  poly(l, vol2, 'ma ma-thick ma-violet');
  var t = document.getElementById('vol-ticks');
  for (var i = 15; i < 88; i++) {
    var major = (i === 27 || i === 57 || i === 87);
    el(t, 'line', { 'class': major ? 'tick tick-major' : 'tick', x1: cx(i) + .5, x2: cx(i) + .5, y1: 1597, y2: major ? 1611 : 1605 });
  }
}

drawCandles();
var lines = document.getElementById('kl-lines');
poly(lines, maPurple, 'ma ma-purple');
poly(lines, maOrange, 'ma ma-orange');
poly(lines, maBlack, 'ma ma-black');
drawMarks();
drawVolume();
```
